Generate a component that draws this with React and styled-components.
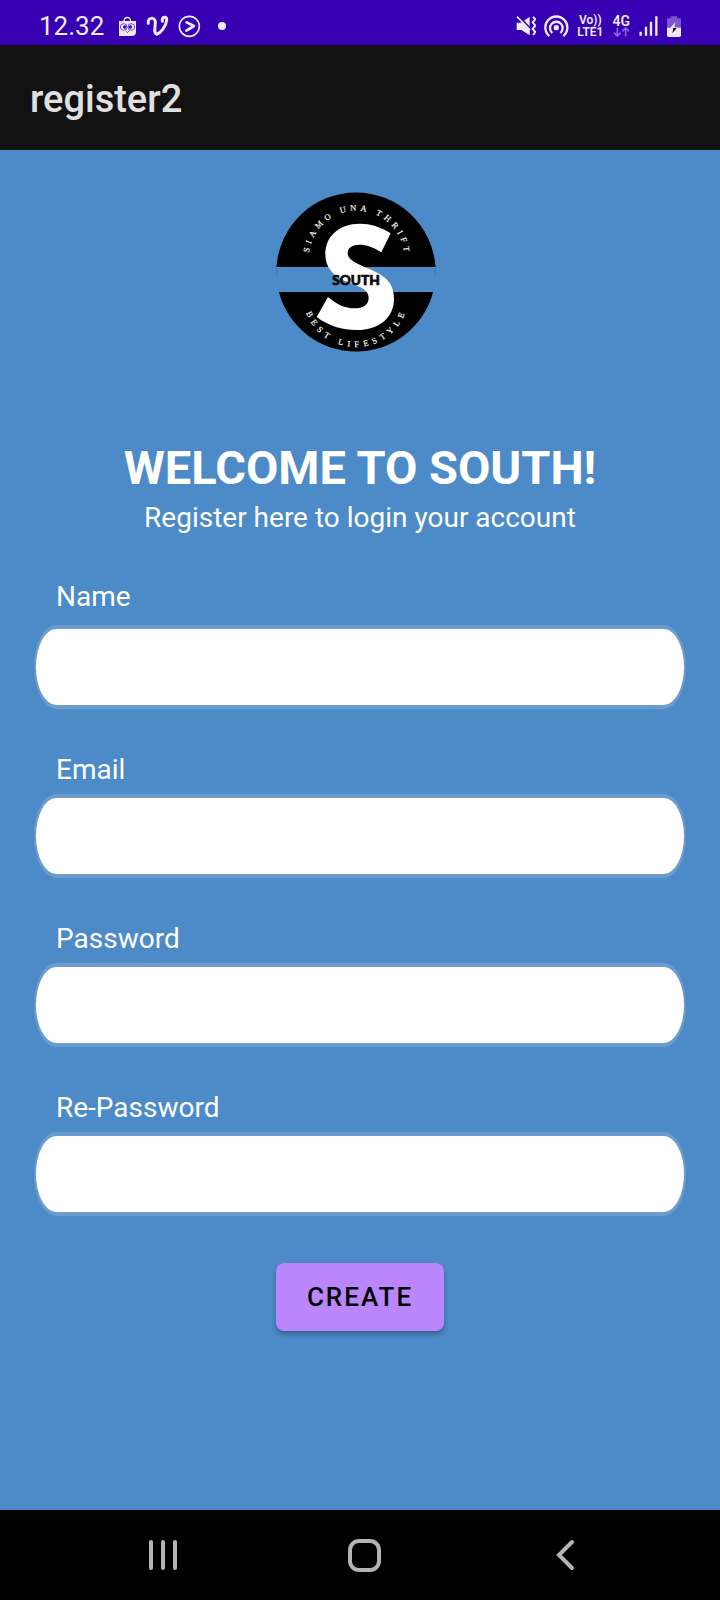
import React from "react";
import styled, { createGlobalStyle } from "styled-components";

const GlobalStyle = createGlobalStyle`
  *, *::before, *::after { box-sizing: border-box; }
  body {
    margin: 0;
    background: #4c8bc7;
    font-family: Roboto, "Liberation Sans", sans-serif;
  }
`;

const Screen = styled.div`
  display: flex;
  flex-direction: column;
  min-height: 100vh;
`;

const StatusBar = styled.div`
  display: flex;
  align-items: center;
  justify-content: space-between;
  height: 45px;
  padding: 7px 39px 0;
  background: #3700b3;
  color: #f0e9fb;
`;

const StatusGroup = styled.div`
  display: flex;
  align-items: center;
  gap: ${(p) => (p.$tight ? 8 : 9)}px;
`;

const Clock = styled.span`
  font-size: 26px;
  line-height: 30px;
  margin-right: 5px;
`;

const Dot = styled.span`
  width: 8px;
  height: 8px;
  margin-left: 8px;
  border-radius: 50%;
  background: currentColor;
`;

const Network = styled.span`
  display: flex;
  flex-direction: column;
  align-items: center;
  font-size: ${(p) => p.$size}px;
  line-height: 12px;
  font-weight: 600;
`;

const Icon = styled.svg`
  display: block;
  flex: none;
`;

const AppBar = styled.header`
  display: flex;
  align-items: center;
  height: 105px;
  padding: 2px 30px 0;
  background: #121212;
`;

const AppTitle = styled.h1`
  margin: 0;
  font-size: 38px;
  line-height: 44px;
  font-weight: 500;
  color: #e0e0e0;
`;

const Main = styled.main`
  flex: 1;
  display: flex;
  flex-direction: column;
  align-items: center;
  padding: 30px 34px;
  color: #fff;
`;

const Welcome = styled.h2`
  margin: 79px 0 0;
  font-size: 47px;
  line-height: 58px;
  font-weight: 700;
  text-align: center;
`;

const Lead = styled.p`
  margin: 4px 0 0;
  font-size: 28px;
  line-height: 34px;
  text-align: center;
`;

const Form = styled.form`
  display: flex;
  flex-direction: column;
  align-items: center;
  gap: 47px;
  width: 100%;
  margin-top: 48px;
`;

const Field = styled.div`
  display: flex;
  flex-direction: column;
  gap: ${(p) => (p.$roomy ? 14 : 10)}px;
  width: 100%;
`;

const Label = styled.label`
  padding-left: 22px;
  font-size: 28px;
  line-height: 28px;
`;

const Input = styled.input`
  width: 100%;
  height: 84px;
  padding: 0 24px;
  border: solid #6c9ccd;
  border-width: 4px 2px;
  border-radius: 22px / 42px;
  background: #fff;
  color: #121212;
  font: inherit;
  font-size: 28px;
`;

const CreateButton = styled.button`
  height: 68px;
  padding: 0 31px;
  border: 0;
  border-radius: 8px;
  background: #bb86fc;
  box-shadow: 0 3px 5px rgba(0, 0, 0, 0.3);
  color: #000;
  font: 500 26px/30px Roboto, "Liberation Sans", sans-serif;
  letter-spacing: 2px;
`;

const NavBar = styled.nav`
  display: grid;
  grid-template-columns: repeat(3, 1fr);
  height: 90px;
  padding: 0 54px 1px 62px;
  background: #000;
`;

const NavButton = styled.button`
  display: grid;
  place-items: center;
  padding: 0;
  border: 0;
  background: none;
  color: #b4b4b4;
`;

function Logo() {
  return (
    <Icon width="180" height="180" viewBox="15 0 540 540" role="img" aria-label="South">
      <defs>
        <path id="arc-top" d="M131 236 A144 144 0 1 1 419 236" />
        <path id="arc-bottom" d="M113 342 A159 159 0 0 0 431 342" />
      </defs>
      <path d="M34.5 261 A239 239 0 0 1 511.5 261 Z" fill="#000" />
      <path d="M41.7 336 H504.3 A239 239 0 0 1 41.7 336 Z" fill="#000" />
      <path d="M35 261 V290 M511 261 V290" stroke="#3b74aa" strokeWidth="2" />
      <path
        fill="#fff"
        d="M377 160 C346 140 315 131 285 131 C221 131 181 170 181 222 C181 262 202 284 240 303 C270 316 311 324 311 353 C311 375 294 385 268 385 C240 385 214 373 189 351 L155 411 C191 438 232 450 275 450 C344 450 387 412 387 356 C387 309 360 287 315 268 C275 251 248 240 248 219 C248 203 263 194 284 194 C304 194 326 202 349 217 Z"
      />
      <text x="273" y="315" textAnchor="middle" fontFamily="Lato, sans-serif" fontWeight="900" fontSize="41" fill="#0a0a0a" stroke="#0a0a0a" strokeWidth="2">
        SOUTH
      </text>
      <g fill="#fff" fontFamily="'Liberation Serif', serif" fontSize="25" textAnchor="middle" stroke="#fff" strokeWidth="0.5">
        <text letterSpacing="12">
          <textPath href="#arc-top" startOffset="51%">SIAMO UNA THRIFT</textPath>
        </text>
        <text letterSpacing="14">
          <textPath href="#arc-bottom" startOffset="51%">BEST LIFESTYLE</textPath>
        </text>
      </g>
    </Icon>
  );
}

function BagIcon() {
  return (
    <Icon width="19" height="21" viewBox="354 48 57 63" aria-hidden="true">
      <path d="M372 66 C370 48 394 48 392 66" fill="none" stroke="currentColor" strokeWidth="4" />
      <path d="M357 63 H408 V95 Q408 108 395 108 H357 Z" fill="currentColor" />
      <g fill="none" stroke="#3700b3" strokeWidth="2">
        <circle cx="371" cy="81" r="10" />
        <circle cx="394" cy="81" r="10" />
        <path d="M377 92 L382 98 L388 92" />
      </g>
      <circle cx="374" cy="81" r="5" fill="#3700b3" />
      <circle cx="391" cy="81" r="5" fill="#3700b3" />
    </Icon>
  );
}

function LoopIcon() {
  return (
    <Icon width="23" height="22" viewBox="441 46 69 66" aria-hidden="true">
      <path
        d="M448 71 C444 54 467 50 469 66 C470 80 462 101 473 104 C485 100 501 80 503 62 C505 48 488 50 490 65"
        fill="none"
        stroke="currentColor"
        strokeWidth="9"
        strokeLinecap="round"
        strokeLinejoin="round"
      />
    </Icon>
  );
}

function CircleArrowIcon() {
  return (
    <Icon width="23" height="23" viewBox="534 45 69 69" aria-hidden="true" fill="none" stroke="currentColor">
      <circle cx="568" cy="79" r="30" strokeWidth="5" />
      <path d="M560 67 L582 78 L559 92" strokeWidth="8" strokeLinecap="round" strokeLinejoin="round" />
    </Icon>
  );
}

function MuteIcon() {
  return (
    <Icon width="20" height="20" viewBox="48 48 60 60" aria-hidden="true">
      <path d="M50 68 H63 L89 50 V106 L64 90 H50 Z" fill="currentColor" />
      <path d="M54 46 L94 88" stroke="#3700b3" strokeWidth="5" />
      <path d="M51 50 L90 90" stroke="currentColor" strokeWidth="5" />
      <path d="M99 51 L106 58 L98 67 L106 77 L98 87 L106 96 L99 105" fill="none" stroke="currentColor" strokeWidth="6" />
    </Icon>
  );
}

function HotspotIcon() {
  return (
    <Icon width="25" height="22" viewBox="135 45 75 66" aria-hidden="true" fill="none" stroke="currentColor" strokeWidth="7">
      <circle cx="172" cy="83" r="8" fill="currentColor" stroke="none" />
      <path d="M151 108 A33 33 0 1 1 193 108" />
      <path d="M160 99 A19 19 0 1 1 184 99" />
    </Icon>
  );
}

function DataArrowsIcon() {
  return (
    <Icon width="17" height="10" viewBox="334 82 51 30" aria-hidden="true">
      <path d="M347 84 V109 M337 99 L347 109 L357 99 M372 110 V85 M362 95 L372 85 L382 95" fill="none" stroke="#8a65d6" strokeWidth="5" />
    </Icon>
  );
}

function SignalIcon() {
  return (
    <Icon width="19" height="20" viewBox="417 48 57 60" aria-hidden="true">
      <path d="M422 95 V107 M438 80 V107 M453 65 V107 M469 49 V107" stroke="currentColor" strokeWidth="7" />
    </Icon>
  );
}

function BatteryIcon() {
  return (
    <Icon width="14" height="21" viewBox="501 47 42 63" aria-hidden="true">
      <path d="M512 48 H532 V54 H539 Q543 54 543 58 V83 H501 V58 Q501 54 505 54 H512 Z" fill="#8154d2" />
      <path d="M501 82 H543 V105 Q543 110 538 110 H506 Q501 110 501 105 Z" fill="currentColor" />
      <path d="M526 65 L509 85 H520 L517 99 L533 80 H523 Z" fill="currentColor" />
      <path d="M510 84 H520 L517 99 L531 82 Z" fill="#15102a" />
    </Icon>
  );
}

const fields = [
  { id: "name", label: "Name", type: "text", roomy: true },
  { id: "email", label: "Email", type: "email" },
  { id: "password", label: "Password", type: "password" },
  { id: "repassword", label: "Re-Password", type: "password" },
];

export default function App() {
  return (
    <Screen>
      <GlobalStyle />
      <StatusBar>
        <StatusGroup>
          <Clock>12.32</Clock>
          <BagIcon />
          <LoopIcon />
          <CircleArrowIcon />
          <Dot />
        </StatusGroup>
        <StatusGroup>
          <StatusGroup $tight>
            <MuteIcon />
            <HotspotIcon />
            <Network $size={12}>
              <span>Vo))</span>
              <span>LTE1</span>
            </Network>
          </StatusGroup>
          <Network $size={14}>
            <span>4G</span>
            <DataArrowsIcon />
          </Network>
          <SignalIcon />
          <BatteryIcon />
        </StatusGroup>
      </StatusBar>
      <AppBar>
        <AppTitle>register2</AppTitle>
      </AppBar>
      <Main>
        <Logo />
        <Welcome>WELCOME TO SOUTH!</Welcome>
        <Lead>Register here to login your account</Lead>
        <Form onSubmit={(e) => e.preventDefault()}>
          {fields.map((f) => (
            <Field key={f.id} $roomy={f.roomy}>
              <Label htmlFor={f.id}>{f.label}</Label>
              <Input id={f.id} name={f.id} type={f.type} />
            </Field>
          ))}
          <CreateButton type="submit">CREATE</CreateButton>
        </Form>
      </Main>
      <NavBar>
        <NavButton type="button" aria-label="Recent apps">
          <Icon width="30" height="32" viewBox="0 0 30 32" stroke="currentColor" strokeWidth="4" strokeLinecap="round">
            <path d="M3 3 V29 M15 3 V29 M27 3 V29" />
          </Icon>
        </NavButton>
        <NavButton type="button" aria-label="Home">
          <Icon width="34" height="34" viewBox="0 0 34 34" fill="none" stroke="currentColor" strokeWidth="4">
            <rect x="3" y="3" width="29" height="29" rx="9" />
          </Icon>
        </NavButton>
        <NavButton type="button" aria-label="Back">
          <Icon width="20" height="32" viewBox="0 0 20 32" fill="none" stroke="currentColor" strokeWidth="4" strokeLinecap="round">
            <path d="M17 3 L4 16 L17 29" />
          </Icon>
        </NavButton>
      </NavBar>
    </Screen>
  );
}
